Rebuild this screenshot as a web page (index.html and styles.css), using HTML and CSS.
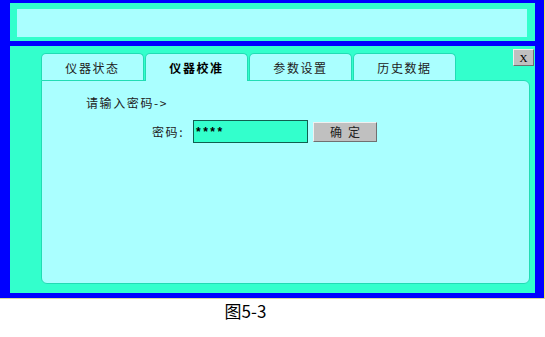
FILE: index.html
```html
<!DOCTYPE html>
<html lang="zh">
<head>
<meta charset="utf-8">
<title>仪器校准</title>
<link rel="stylesheet" href="styles.css">
</head>
<body>
<div class="frame">
  <div class="top"><div class="top-inner"></div></div>
  <div class="main">
    <button class="close">X</button>
    <div class="tabs">
      <div class="tab">仪器状态</div>
      <div class="tab active">仪器校准</div>
      <div class="tab">参数设置</div>
      <div class="tab">历史数据</div>
    </div>
    <div class="panel">
      <div class="prompt">请输入密码-&gt;</div>
      <div class="row">
        <span class="label">密码:</span>
        <div class="field">****</div>
        <button class="ok">确定</button>
      </div>
    </div>
  </div>
</div>
<div class="caption">图5-3</div>
</body>
</html>
```
FILE: styles.css
```css
html, body {
  margin: 0;
  padding: 0;
  background: #ffffff;
}
body {
  font-family: "Noto Sans CJK SC", "Liberation Sans", sans-serif;
  color: #000;
}
.frame {
  width: 545px;
  height: 299px;
  box-sizing: border-box;
  background: #0000ff;
  padding: 3px 9px 5px 10px;
  display: flex;
  flex-direction: column;
  gap: 5px;
  border-right: 1px solid #e8e860;
  border-bottom: 1px solid #d8d8a0;
}
.top {
  height: 38px;
  box-sizing: border-box;
  background: #33ffcc;
  padding: 6px 8px 4px 7px;
}
.top-inner {
  height: 100%;
  background: #aaffff;
}
.main {
  position: relative;
  flex: 1;
  background: #33ffcc;
  padding: 7px 5px 9px 31px;
  display: flex;
  flex-direction: column;
}
.close {
  position: absolute;
  top: 3px;
  right: 1px;
  width: 21px;
  height: 17px;
  padding: 0;
  background: #c0c0c0;
  border: 1px solid;
  border-color: #f0f0f0 #707070 #707070 #f0f0f0;
  font-family: "Liberation Serif", serif;
  font-size: 11px;
  line-height: 14px;
  color: #000;
}
.tabs {
  display: flex;
  gap: 1px;
  height: 27px;
  position: relative;
  z-index: 1;
}
.tab {
  width: 103px;
  box-sizing: border-box;
  background: #aaffff;
  border: 1px solid #22dcb4;
  border-bottom: none;
  border-radius: 5px 5px 0 0;
  font-size: 12px;
  letter-spacing: 1.6px;
  text-align: center;
  line-height: 28px;
  color: #222;
}
.tab.active {
  font-weight: bold;
  color: #000;
  height: 28px;
}
.panel {
  flex: 1;
  background: #aaffff;
  border: 1px solid #22dcb4;
  border-radius: 0 6px 6px 6px;
  padding: 14px 0 0 44px;
  display: flex;
  flex-direction: column;
}
.prompt {
  font-size: 12px;
  letter-spacing: 1.6px;
  line-height: 16px;
  color: #222;
}
.row {
  margin-top: 9px;
  display: flex;
  align-items: center;
  padding-left: 66px;
}
.label {
  width: 41px;
  font-size: 12px;
  letter-spacing: 1.6px;
  color: #222;
}
.field {
  width: 115px;
  height: 23px;
  box-sizing: border-box;
  background: #33ffcc;
  border: 1px solid #106050;
  font-family: "Liberation Sans", sans-serif;
  font-weight: bold;
  font-size: 12px;
  letter-spacing: 2.5px;
  line-height: 23px;
  padding-left: 2px;
}
.ok {
  margin-left: 5px;
  width: 64px;
  height: 20px;
  padding: 0 0 0 6px;
  background: #c0c0c0;
  border: 1px solid;
  border-color: #f0f0f0 #707070 #707070 #f0f0f0;
  font-family: "Noto Sans CJK SC", sans-serif;
  font-size: 12px;
  letter-spacing: 6px;
  color: #222;
}
.caption {
  width: 491px;
  text-align: center;
  margin-top: 2px;
  font-size: 17px;
  line-height: 20px;
}
```
